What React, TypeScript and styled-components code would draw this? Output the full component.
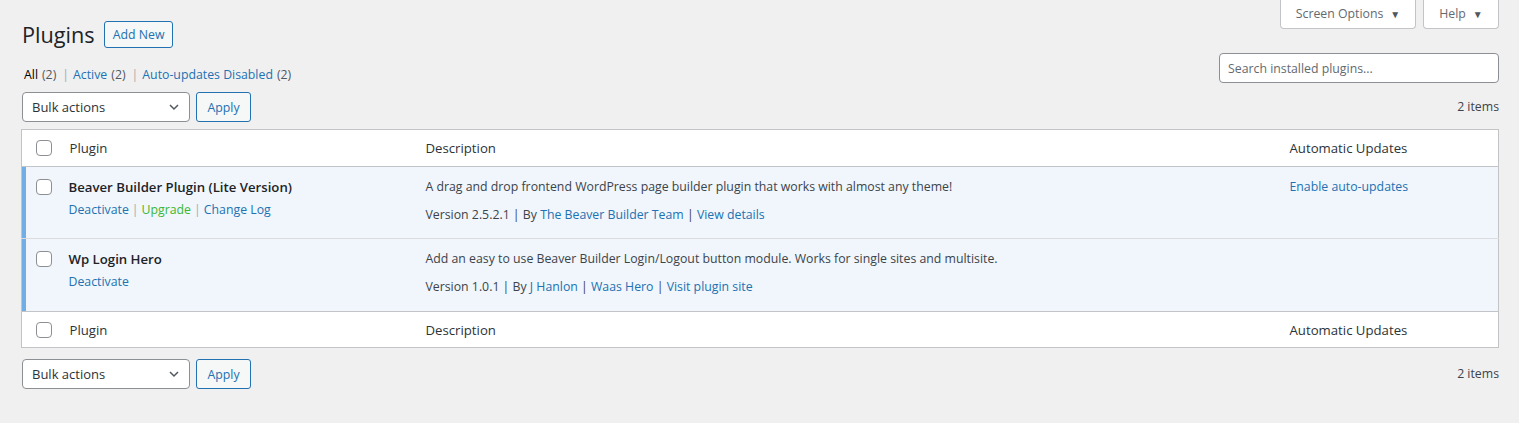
import React from "react";
import styled, { createGlobalStyle } from "styled-components";

const Global = createGlobalStyle`
  html, body { margin: 0; padding: 0; background: #f0f0f1; }
  body {
    font-family: "Open Sans", "Noto Sans", sans-serif;
    font-size: 12.3px;
    line-height: 20px;
    color: #3c434a;
  }
  * { box-sizing: border-box; }
`;

const Page = styled.div`
  display: flex;
  flex-direction: column;
  padding: 0 20px 0 21px;
  min-height: 423px;
`;

const TopBar = styled.div`
  display: flex;
  justify-content: space-between;
  align-items: flex-start;
`;

const TitleRow = styled.div`
  display: flex;
  align-items: center;
  gap: 9px;
  padding: 21px 0 0 1px;
`;

const Title = styled.h1`
  margin: 0;
  font-size: 21.7px;
  font-weight: 400;
  line-height: 26px;
  color: #1d2327;
`;

const OutlineButton = styled.button<{ $h?: number; $w?: number; $weight?: number }>`
  font-family: inherit;
  font-size: 12.3px;
  color: #2271b1;
  background: #f6f7f7;
  border: 1px solid #2271b1;
  border-radius: 3px;
  padding: 0 8px;
  height: ${(p) => p.$h ?? 30}px;
  ${(p) => (p.$w ? `width: ${p.$w}px;` : "")}
  font-weight: ${(p) => p.$weight ?? 400};
  cursor: pointer;
`;

const MetaLinks = styled.div`
  display: flex;
  gap: 7px;
`;

const MetaTab = styled.button<{ $w: number }>`
  width: ${(p) => p.$w}px;
  height: 29px;
  font-family: inherit;
  font-size: 12.3px;
  color: #646970;
  background: #fff;
  border: 1px solid #c3c4c7;
  border-top: none;
  border-radius: 0 0 4px 4px;
  display: flex;
  align-items: center;
  justify-content: center;
  gap: 7px;
  padding: 0 0 1px;
`;

const Caret = styled.span`
  font-size: 10px;
  color: #50575e;
  line-height: 1;
`;

const FilterRow = styled.div`
  display: flex;
  justify-content: space-between;
  align-items: flex-start;
  margin-top: 5px;
`;

const Filters = styled.ul`
  list-style: none;
  margin: 12px 0 0 3px;
  padding: 0;
  display: flex;
  color: #646970;
`;

const FilterItem = styled.li`
  display: flex;
`;

const Sep = styled.span`
  color: #a7aaad;
  margin: 0 4px 0 6px;
`;

const FilterLink = styled.a<{ $current?: boolean }>`
  color: ${(p) => (p.$current ? "#000" : "#2271b1")};
  text-decoration: none;
`;

const Count = styled.span`
  color: #50575e;
  margin-left: 4px;
`;

const SearchInput = styled.input`
  width: 280px;
  height: 30px;
  font-family: inherit;
  font-size: 12.3px;
  border: 1px solid #8c8f94;
  border-radius: 4px;
  padding: 0 8px;
  background: #fff;
  color: #2c3338;
  &::placeholder { color: #646970; }
`;

const TableNav = styled.div<{ $top?: boolean }>`
  display: flex;
  align-items: center;
  justify-content: space-between;
  margin: ${(p) => (p.$top ? "7px 0 7px" : "11px 0 0")};
`;

const Actions = styled.div`
  display: flex;
  align-items: center;
  gap: 6px;
  margin-left: 1px;
`;

const SelectBox = styled.div`
  width: 168px;
  height: 30px;
  border: 1px solid #8c8f94;
  border-radius: 4px;
  background: #fff;
  color: #2c3338;
  display: flex;
  align-items: center;
  justify-content: space-between;
  padding: 0 7px 0 9px;
  font-size: 13px;
`;

const Items = styled.div`
  color: #3c434a;
`;

const Table = styled.table`
  width: 100%;
  border-collapse: collapse;
  table-layout: fixed;
  background: #fff;
  border: 1px solid #c3c4c7;
`;

const HeadRow = styled.tr<{ $foot?: boolean }>`
  height: ${(p) => (p.$foot ? 36 : 37)}px;
  ${(p) => (p.$foot ? "border-top: 1px solid #c3c4c7;" : "border-bottom: 1px solid #c3c4c7;")}
`;

const CheckCell = styled.td<{ $active?: boolean }>`
  width: 38px;
  padding: ${(p) => (p.$active ? "12px 0 0 14px" : "0 0 0 14px")};
  vertical-align: ${(p) => (p.$active ? "top" : "middle")};
  ${(p) => (p.$active ? "box-shadow: inset 4px 0 0 #72aee6;" : "")}
`;

const HeadCell = styled.th<{ $w?: number }>`
  ${(p) => (p.$w ? `width: ${p.$w}px;` : "")}
  text-align: left;
  font-weight: 400;
  color: #2c3338;
  font-size: 13.2px;
  padding: 0 10px;
`;

const Check = styled.span`
  display: block;
  width: 16px;
  height: 16px;
  border: 1px solid #8c8f94;
  border-radius: 4px;
  background: #fff;
`;

const PluginRow = styled.tr<{ $h: number }>`
  background: #f0f6fc;
  height: ${(p) => p.$h}px;
  border-bottom: 1px solid #dcdcde;
  &:last-child { border-bottom: none; }
`;

const Cell = styled.td`
  vertical-align: top;
  padding: 10px 10px 0;
`;

const PluginName = styled.strong`
  display: block;
  font-size: 13.2px;
  font-weight: 600;
  color: #1d2327;
  line-height: 20px;
  margin-left: -1px;
`;

const RowActions = styled.div`
  margin-top: 3px;
  margin-left: -1px;
  color: #a7aaad;
  line-height: 20px;
`;

const RowLink = styled.a<{ $green?: boolean }>`
  color: ${(p) => (p.$green ? "#3db634" : "#2271b1")};
  text-decoration: none;
`;

const Pipe = styled.span`
  color: #a7aaad;
  margin: 0 3px;
`;

const Desc = styled.p`
  margin: 0;
  line-height: 20px;
  color: #3c434a;
`;

const Meta = styled.div`
  margin-top: 8px;
  line-height: 20px;
  color: #3c434a;
`;

const Link = styled.a`
  color: #2271b1;
  text-decoration: none;
`;

const Chevron = () => (
  <svg width="16" height="16" viewBox="0 0 20 20" aria-hidden>
    <path d="M5 7.5l5 5 5-5" fill="none" stroke="#50575e" strokeWidth="1.8" />
  </svg>
);

const Bulk = () => (
  <Actions>
    <SelectBox>
      <span>Bulk actions</span>
      <Chevron />
    </SelectBox>
    <OutlineButton $w={55}>Apply</OutlineButton>
  </Actions>
);

const Header = ({ foot }: { foot?: boolean }) => (
  <HeadRow $foot={foot}>
    <CheckCell as="th">
      <Check />
    </CheckCell>
    <HeadCell $w={356}>Plugin</HeadCell>
    <HeadCell>Description</HeadCell>
    <HeadCell $w={219}>Automatic Updates</HeadCell>
  </HeadRow>
);

export default function App() {
  return (
    <>
      <Global />
      <Page>
        <TopBar>
          <TitleRow>
            <Title>Plugins</Title>
            <OutlineButton $h={27} $weight={500}>Add New</OutlineButton>
          </TitleRow>
          <MetaLinks>
            <MetaTab $w={136}>
              Screen Options <Caret>▼</Caret>
            </MetaTab>
            <MetaTab $w={76}>
              Help <Caret>▼</Caret>
            </MetaTab>
          </MetaLinks>
        </TopBar>

        <FilterRow>
          <Filters>
            <FilterItem>
              <FilterLink $current>All</FilterLink>
              <Count>(2)</Count>
              <Sep>|</Sep>
            </FilterItem>
            <FilterItem>
              <FilterLink>Active</FilterLink>
              <Count>(2)</Count>
              <Sep>|</Sep>
            </FilterItem>
            <FilterItem>
              <FilterLink>Auto-updates Disabled</FilterLink>
              <Count>(2)</Count>
            </FilterItem>
          </Filters>
          <SearchInput placeholder="Search installed plugins..." />
        </FilterRow>

        <TableNav $top>
          <Bulk />
          <Items>2 items</Items>
        </TableNav>

        <Table>
          <thead>
            <Header />
          </thead>
          <tbody>
            <PluginRow $h={72}>
              <CheckCell $active>
                <Check />
              </CheckCell>
              <Cell>
                <PluginName>Beaver Builder Plugin (Lite Version)</PluginName>
                <RowActions>
                  <RowLink>Deactivate</RowLink>
                  <Pipe>|</Pipe>
                  <RowLink $green>Upgrade</RowLink>
                  <Pipe>|</Pipe>
                  <RowLink>Change Log</RowLink>
                </RowActions>
              </Cell>
              <Cell>
                <Desc>
                  A drag and drop frontend WordPress page builder plugin that works with almost any theme!
                </Desc>
                <Meta>
                  Version 2.5.2.1 | By <Link>The Beaver Builder Team</Link> | <Link>View details</Link>
                </Meta>
              </Cell>
              <Cell>
                <Link>Enable auto-updates</Link>
              </Cell>
            </PluginRow>
            <PluginRow $h={73}>
              <CheckCell $active>
                <Check />
              </CheckCell>
              <Cell>
                <PluginName>Wp Login Hero</PluginName>
                <RowActions>
                  <RowLink>Deactivate</RowLink>
                </RowActions>
              </Cell>
              <Cell>
                <Desc>
                  Add an easy to use Beaver Builder Login/Logout button module. Works for single sites and multisite.
                </Desc>
                <Meta>
                  Version 1.0.1 | By <Link>J Hanlon</Link> | <Link>Waas Hero</Link> | <Link>Visit plugin site</Link>
                </Meta>
              </Cell>
              <Cell />
            </PluginRow>
          </tbody>
          <tfoot>
            <Header foot />
          </tfoot>
        </Table>

        <TableNav>
          <Bulk />
          <Items>2 items</Items>
        </TableNav>
      </Page>
    </>
  );
}
